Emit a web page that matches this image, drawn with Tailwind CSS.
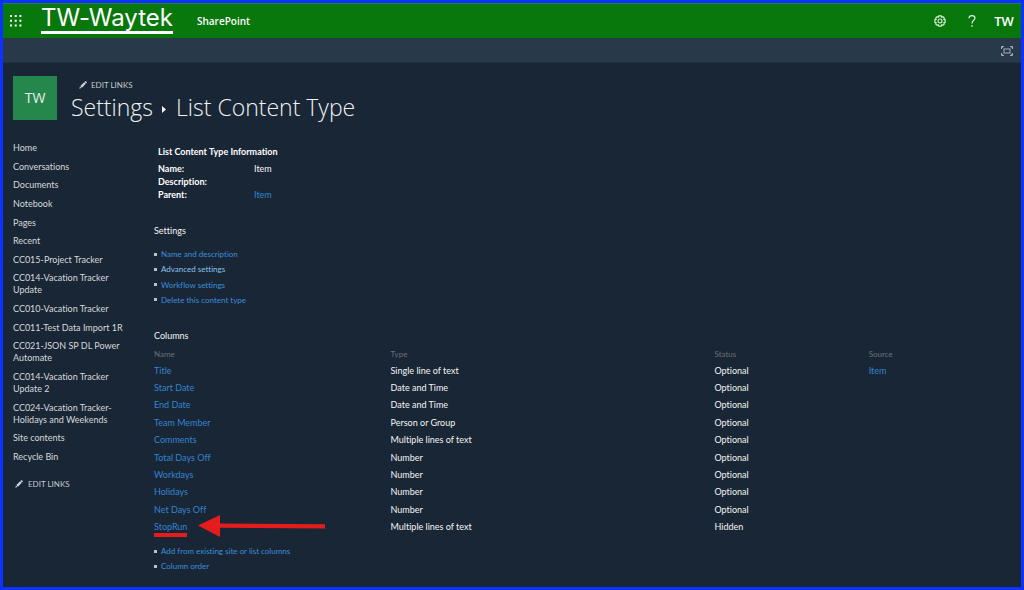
<!DOCTYPE html>
<html lang="en">
<head>
<meta charset="utf-8">
<title>List Content Type</title>
<script src="https://cdn.jsdelivr.net/npm/@tailwindcss/browser@4"></script>
</head>
<body class="flex min-h-screen flex-col border-3 border-[#0c32ff] bg-[#192635] font-['Lato','Open_Sans',sans-serif] text-[9px] leading-3 text-[#f4f4f4] [font-variant-ligatures:none]">
<header class="flex h-[35px] items-center border-t border-[#2b7d3a] bg-[#08780c] pr-[5px] pl-[7px] text-white">
  <button aria-label="App launcher" class="flex size-3 items-center justify-center">
    <svg class="size-3" viewBox="0 0 12 12" fill="currentColor"><path d="M0 0h2v2H0zM4.700 0h2v2h-2zM9.400 0h2v2h-2zM0 4.700h2v2H0zM4.700 4.700h2v2h-2zM9.400 4.700h2v2h-2zM0 9.400h2v2H0zM4.700 9.400h2v2h-2zM9.400 9.400h2v2h-2z"/></svg>
  </button>
  <a href="#" class="mt-[2px] ml-[19px] self-start border-b-3 border-white pb-px font-['Inter',sans-serif] text-[24px] leading-6 font-normal">TW-Waytek</a>
  <a href="#" class="ml-6 font-['Open_Sans',sans-serif] text-[10px] font-semibold">SharePoint</a>
  <div class="ml-auto flex items-center gap-5">
    <button aria-label="Settings" class="mr-[2px] size-3">
      <svg class="size-3" viewBox="0 0 14 14" fill="none" stroke="#d8f0d8"><path d="M5.600 1h2.800l.5 1.500 1.500-.6 1.700 1.700-.6 1.500 1.500.5v2.800l-1.500.5.6 1.500-1.700 1.700-1.500-.6-.5 1.500H5.600l-.5-1.500-1.500.6-1.700-1.700.6-1.500L1 8.400V5.600l1.500-.5-.6-1.500 1.700-1.700 1.500.6z" stroke-width="1.400"/><circle cx="7" cy="7" r="2.300" stroke-width="1.300"/></svg>
    </button>
    <button aria-label="Help" class="h-3 w-2">
      <svg class="h-3 w-2" viewBox="0 0 8 12" fill="none" stroke="#e4f4e4" stroke-width="1.100"><path d="M1 3.200C1 1.500 2.200.6 4 .6s3 .9 3 2.500C7 5.200 4 5.500 4 8.600"/><path d="M4 10.300v1.500" stroke-width="1.400"/></svg>
    </button>
    <button aria-label="Account" class="-ml-1 flex size-6 items-center justify-center rounded-full border border-[#0b7011] font-['Open_Sans',sans-serif] text-[13px] font-semibold">TW</button>
  </div>
</header>
<div class="flex h-[25px] items-center justify-end border-b border-[#223140] bg-[#28394a] pt-[2px] pr-2">
  <button aria-label="Focus on content" class="size-3">
    <svg class="size-3" viewBox="0 0 12 12" fill="none" stroke="#a4aeb8"><path d="M.5 4V1.500H3M9 1.500h2.500V4M11.500 8v2.500H9M3 10.500H.5V8M3 4h6v4H3z"/><path d="M1 2l1.500 1.500M11 2L9.500 3.500M11 10L9.500 8.500M1 10l1.500-1.500" stroke-width=".7"/></svg>
  </button>
</div>
<div class="flex items-start px-[10px] pt-[13px]">
  <a href="#" class="flex size-11 items-center justify-center bg-[#25874b] font-['Open_Sans',sans-serif] text-[14px] text-[#e6f2ea]">TW</a>
  <div class="ml-[14px]">
    <button class="ml-2 flex items-center gap-1 pt-[3px] text-[8px] text-[#c4c8cc]">
      <svg class="size-2" viewBox="0 0 9 9" fill="#d0d4d8"><path d="M.3 8.700l.8-2.500 1.700 1.700zM1.500 5.700L5.800 1.400l1.800 1.800-4.300 4.300zM6.200 1l.6-.6q.6-.5 1.200 0l.6.600q.5.600 0 1.200l-.6.600z"/></svg>
      EDIT LINKS
    </button>
    <h1 class="flex items-center font-['Open_Sans',sans-serif] text-[23px] leading-8 font-light text-[#f0f2f4]">
      <a href="#">Settings</a>
      <svg class="mt-1 mr-[10px] ml-[9px] h-[7px] w-1" viewBox="0 0 4 7" fill="currentColor"><path d="M0 0l4 3.500L0 7z"/></svg>
      List Content Type
    </h1>
  </div>
</div>
<div class="flex px-[10px] pt-[13px]">
  <nav class="w-[141px] shrink-0 pt-[6px] text-[#d6d9dc]">
    <ul class="flex h-[321px] w-28 flex-col justify-between">
      <li><a href="#">Home</a></li>
      <li><a href="#">Conversations</a></li>
      <li><a href="#">Documents</a></li>
      <li><a href="#">Notebook</a></li>
      <li><a href="#">Pages</a></li>
      <li><a href="#">Recent</a></li>
      <li><a href="#">CC015-Project Tracker</a></li>
      <li><a href="#">CC014-Vacation Tracker<br>Update</a></li>
      <li><a href="#">CC010-Vacation Tracker</a></li>
      <li><a href="#" class="whitespace-nowrap">CC011-Test Data Import 1R</a></li>
      <li><a href="#">CC021-JSON SP DL Power<br>Automate</a></li>
      <li><a href="#">CC014-Vacation Tracker<br>Update 2</a></li>
      <li><a href="#">CC024-Vacation Tracker-<br>Holidays and Weekends</a></li>
      <li><a href="#">Site contents</a></li>
      <li><a href="#">Recycle Bin</a></li>
    </ul>
    <button class="mt-[15px] ml-[2px] flex items-center gap-[5px] text-[8px] text-[#c4c8cc]">
      <svg class="size-2" viewBox="0 0 9 9" fill="#d0d4d8"><path d="M.3 8.700l.8-2.500 1.700 1.700zM1.500 5.700L5.800 1.400l1.800 1.800-4.300 4.300zM6.200 1l.6-.6q.6-.5 1.200 0l.6.600q.5.600 0 1.200l-.6.600z"/></svg>
      EDIT LINKS
    </button>
  </nav>
  <main class="min-w-0 grow pt-[10px]">
    <section class="pl-1">
      <h2 class="font-bold text-white">List Content Type Information</h2>
      <dl class="mt-1 grid grid-cols-[96px_1fr] leading-[13px]">
        <dt class="font-bold text-white">Name:</dt><dd>Item</dd>
        <dt class="font-bold text-white">Description:</dt><dd></dd>
        <dt class="font-bold text-white">Parent:</dt><dd><a href="#" class="text-[#3484d0]">Item</a></dd>
      </dl>
    </section>
    <section class="mt-6">
      <h2>Settings</h2>
      <ul class="mt-[11px] flex h-[58px] flex-col justify-between text-[8px] text-[#3c8edc]">
        <li class="flex items-center gap-1"><span class="size-[3px] bg-[#c0c0c0]"></span><a href="#">Name and description</a></li>
        <li class="flex items-center gap-1"><span class="size-[3px] bg-[#c0c0c0]"></span><a href="#" class="text-[#8cc4f0]">Advanced settings</a></li>
        <li class="flex items-center gap-1"><span class="size-[3px] bg-[#c0c0c0]"></span><a href="#">Workflow settings</a></li>
        <li class="flex items-center gap-1"><span class="size-[3px] bg-[#c0c0c0]"></span><a href="#">Delete this content type</a></li>
      </ul>
    </section>
    <section class="mt-6">
      <h2>Columns</h2>
      <table class="mt-[3px] h-[191px] w-full table-fixed text-left [&_a]:text-[#3484d0] [&_td]:p-0">
        <thead>
          <tr class="h-[17px] text-[8px] text-[#6b7178] [&>th]:p-0 [&>th]:font-normal"><th class="w-[27.6%]">Name</th><th class="w-[37.8%]">Type</th><th class="w-[18%]">Status</th><th>Source</th></tr>
        </thead>
        <tbody>
          <tr><td><a href="#">Title</a></td><td>Single line of text</td><td>Optional</td><td><a href="#">Item</a></td></tr>
          <tr><td><a href="#">Start Date</a></td><td>Date and Time</td><td>Optional</td><td></td></tr>
          <tr><td><a href="#">End Date</a></td><td>Date and Time</td><td>Optional</td><td></td></tr>
          <tr><td><a href="#">Team Member</a></td><td>Person or Group</td><td>Optional</td><td></td></tr>
          <tr><td><a href="#">Comments</a></td><td>Multiple lines of text</td><td>Optional</td><td></td></tr>
          <tr><td><a href="#">Total Days Off</a></td><td>Number</td><td>Optional</td><td></td></tr>
          <tr><td><a href="#">Workdays</a></td><td>Number</td><td>Optional</td><td></td></tr>
          <tr><td><a href="#">Holidays</a></td><td>Number</td><td>Optional</td><td></td></tr>
          <tr><td><a href="#">Net Days Off</a></td><td>Number</td><td>Optional</td><td></td></tr>
          <tr><td><div class="relative w-fit"><a href="#">StopRun</a>
            <span class="absolute inset-x-0 top-3 h-1 bg-[#e51c1c]"></span>
            <svg class="absolute -top-[6px] left-11 h-[22px] w-[127px]" viewBox="0 0 127 22" fill="#e51c1c"><path d="M0 10.500L22 0v8.500l105 .8v4.200l-105-.7V22z"/></svg>
          </div></td><td>Multiple lines of text</td><td>Hidden</td><td></td></tr>
        </tbody>
      </table>
      <ul class="mt-[9px] flex flex-col gap-[3px] text-[8px] text-[#3c8edc]">
        <li class="flex items-center gap-1"><span class="size-[3px] bg-[#c0c0c0]"></span><a href="#">Add from existing site or list columns</a></li>
        <li class="flex items-center gap-1"><span class="size-[3px] bg-[#c0c0c0]"></span><a href="#">Column order</a></li>
      </ul>
    </section>
  </main>
</div>
</body>
</html>
